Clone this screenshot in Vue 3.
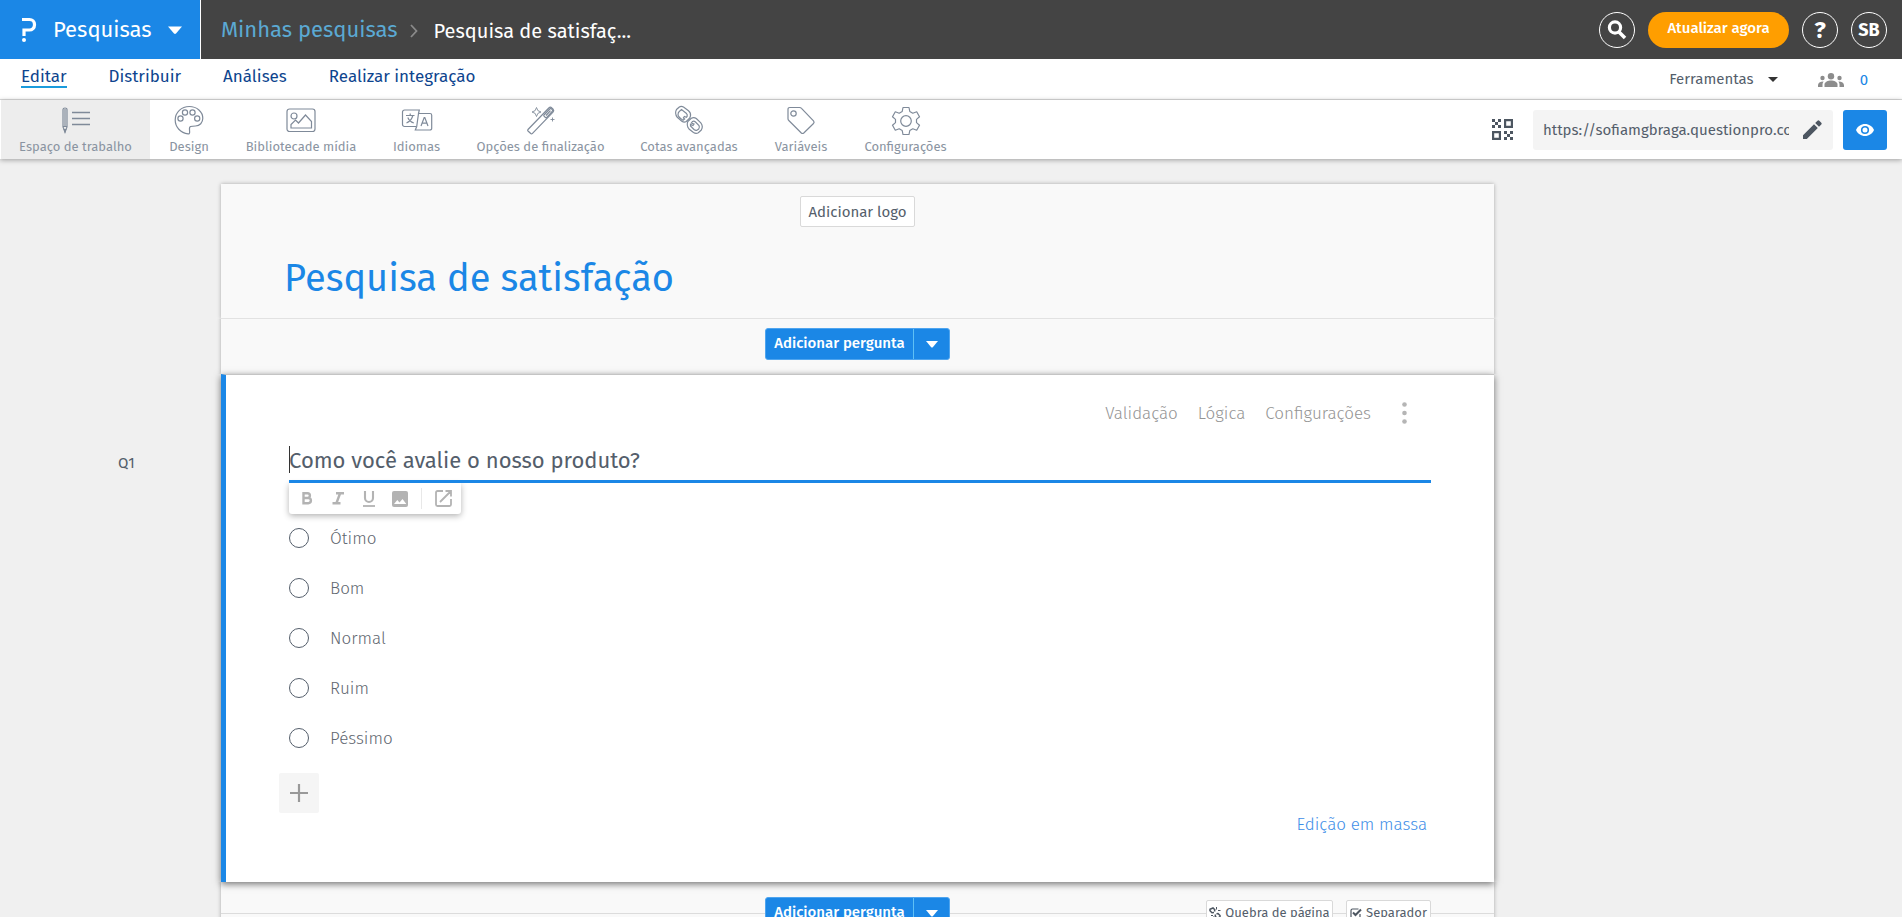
<script setup>
import { ref } from 'vue'

const menu = ['Editar', 'Distribuir', 'Análises', 'Realizar integração']

const tools = [
  { id: 'workspace', label: 'Espaço de trabalho' },
  { id: 'design', label: 'Design' },
  { id: 'media', label: 'Bibliotecade mídia' },
  { id: 'languages', label: 'Idiomas' },
  { id: 'finish', label: 'Opções de finalização' },
  { id: 'quotas', label: 'Cotas avançadas' },
  { id: 'variables', label: 'Variáveis' },
  { id: 'settings', label: 'Configurações' },
]

const options = ['Ótimo', 'Bom', 'Normal', 'Ruim', 'Péssimo']

const url = ref('https://sofiamgbraga.questionpro.com')
const question = ref('Como você avalie o nosso produto?')
const answer = ref('')
</script>

<template>
  <div class="page">
    <header class="topbar">
      <button class="product" type="button">
        <svg class="logo" width="16" height="26" viewBox="0 0 16 26" aria-hidden="true">
          <path d="M1 2.500h7.500a5 5 0 0 1 5 5v.5a5 5 0 0 1-5 5H3v6" fill="none" stroke="#fff" stroke-width="3.200" />
          <circle cx="3" cy="23" r="2" fill="#fff" />
        </svg>
        <span>Pesquisas</span>
        <svg width="14" height="8" viewBox="0 0 14 8" aria-hidden="true">
          <path d="M0 .5h14L8 7.500q-1 .8-2 0z" fill="#fff" />
        </svg>
      </button>
      <nav class="crumbs" aria-label="Navegação">
        <a href="#pesquisas">Minhas pesquisas</a>
        <svg width="8" height="14" viewBox="0 0 8 14" aria-hidden="true">
          <path d="M1 1l5.500 6L1 13" fill="none" stroke="#8a8a8a" stroke-width="1.800" />
        </svg>
        <span class="current">Pesquisa de satisfaç...</span>
      </nav>
      <div class="account">
        <button class="round" type="button" aria-label="Buscar">
          <svg width="20" height="20" viewBox="0 0 20 20" aria-hidden="true">
            <circle cx="8" cy="7.500" r="5.600" fill="none" stroke="#fff" stroke-width="3.200" />
            <path d="M11.500 11.500l6.500 6.500" stroke="#fff" stroke-width="3.600" />
          </svg>
        </button>
        <button class="upgrade" type="button">Atualizar agora</button>
        <button class="round help" type="button">?</button>
        <button class="round user" type="button">SB</button>
      </div>
    </header>

    <div class="menubar">
      <nav class="menu" aria-label="Menu">
        <a v-for="(item, i) in menu" :key="item" href="#menu" :class="{ active: i === 0 }">{{ item }}</a>
      </nav>
      <button class="ferramentas" type="button">
        <span>Ferramentas</span>
        <svg width="10" height="5" viewBox="0 0 10 5" aria-hidden="true"><path d="M0 0h10L5 5z" fill="#333" /></svg>
      </button>
      <a class="people" href="#colaboradores">
        <svg width="26" height="14" viewBox="0 0 26 14" fill="#8c8c8c" aria-hidden="true">
          <circle cx="13" cy="3.200" r="3.200" />
          <circle cx="4.500" cy="5" r="2.200" />
          <circle cx="21.500" cy="5" r="2.200" />
          <path d="M6.500 14v-2.500c0-2.500 3.500-4 6.500-4s6.500 1.500 6.500 4V14z" />
          <path d="M0 14v-1.800c0-2 2-3.700 5.600-3.700-.8 1-1.100 2-1.100 3V14zM26 14v-1.800c0-2-2-3.700-5.600-3.700.8 1 1.100 2 1.100 3V14z" />
        </svg>
        <span>0</span>
      </a>
    </div>

    <div class="toolbar">
      <div class="tools">
        <button v-for="(tool, i) in tools" :key="tool.id" type="button" class="tool" :class="{ selected: i === 0 }">
          <svg width="32" height="30" viewBox="0 0 32 30" fill="none" stroke="#7f8a99" stroke-width="1.200" aria-hidden="true">
            <g v-if="tool.id === 'workspace'">
              <path d="M3 4.500q0-1.500 2-1.500t2 1.500V22l-2 5-2-5zM3 21.500h4M5 4v17" />
              <path d="M4.200 24.500h1.600L5 27z" fill="#7f8a99" />
              <path d="M12 7.500H30M12 13.500H30M12 19.500H30" stroke-width="1.500" />
            </g>
            <g v-else-if="tool.id === 'design'">
              <path d="M17.500 21.500c-2 .8-.6 3.500-.9 6.300-.1 1-.6 1.200-1.500 1C7.500 28 2.200 22 2.200 15 2.200 7.500 8.500 1.500 16.300 1.500c7.600 0 13.500 5.300 13.500 11.800 0 4.300-3 7.700-7.300 7.700-2 0-3.500 0-5 .5z" />
              <circle cx="7.500" cy="13.500" r="2.600" /><circle cx="12" cy="7.500" r="2.600" />
              <circle cx="19.500" cy="7.500" r="2.600" /><circle cx="24.200" cy="13.500" r="2.600" />
            </g>
            <g v-else-if="tool.id === 'media'">
              <rect x="2" y="4" width="28" height="22.500" rx="2.500" />
              <circle cx="9" cy="11" r="3" />
              <path d="M6 23v-3.500l4.500-4.500 3 3L20.500 10l6 6.500V23z" />
            </g>
            <g v-else-if="tool.id === 'languages'">
              <path d="M15 21.500H3.500a2 2 0 0 1-2-2V7a2 2 0 0 1 2-2h14.800l-.8 3.500" />
              <path d="M17.500 8.500H29a1.700 1.700 0 0 1 1.700 1.700v13A1.700 1.700 0 0 1 29 25H14.300l1.400-3.500z" />
              <path d="M5 10.500h8.500M9.200 8.500v2M11.800 10.500c-.8 3.500-3 6-6.300 7.500M6.800 12.500c1 2.500 3 4.500 6 5.500" />
              <path d="M20 21l3.200-8.500h.6L27 21M21 18.200h5" />
            </g>
            <g v-else-if="tool.id === 'finish'">
              <path d="M3 24.500L23.800 3q1.500-1.500 3-.1l1.300 1.300q1.300 1.500-.1 3L7.500 28.300q-1 1-2 0L3 26q-.7-.8 0-1.500z" />
              <path d="M19 10l5.700-6q1-1 2 0l.6.700q.8.900-.1 1.800l-5.400 5.800q-.8.800-1.600 0L19 11.200q-.5-.6 0-1.200zM21 10.500l4.500-4.800" />
              <path d="M11.500 2.500q.5 4 4.500 4.500-4 .5-4.500 4.500Q11 7.500 7 7q4-.5 4.500-4.500zM27.500 12.500v4M25.500 14.500h4" stroke-width=".9" />
            </g>
            <g v-else-if="tool.id === 'quotas'">
              <path d="M3.500 4.500L6 2.300q2-1.500 4.500-.3l5 3.800q2.500 2 2 5l-.7 2.200-3.500 3.500q-2 1.200-4.500-.2l-4.500-4q-3-4-.8-7.800z" />
              <path d="M6.500 6.200l2-1.600 4.700 3.600q1.500 1.500.9 3.300l-.7.8-2-.8-1 1.500 1.200 1-1.600 1.200q-5-3.500-5-5.500 0-2.500 1.500-3.500z" />
              <path d="M14.800 16.500l3.500-3.200q2.500-1.500 5 .2l4.500 4.300q2.700 3.500.5 7.200l-3 2.700q-2.300 1.300-4.800-.2l-4.500-3.500q-2.800-3.500-1.200-7.500z" />
              <path d="M18.300 18l1.200-1.500q1.500-.8 3 .5l3.500 3.500q1 2-.3 3.500l-1.700 1.200q-1.500.5-3-.7L17.500 21v-1.500l2.500 1 1-1.500z" />
            </g>
            <g v-else-if="tool.id === 'variables'">
              <path d="M3 4.300q0-1.800 1.800-1.800h9.700q1.300 0 2 .8l12 12.500q1.200 1.400 0 2.700l-9.700 9.500q-1.300 1-2.500 0L3.800 15.500Q3 14.800 3 13.700z" />
              <circle cx="8.500" cy="8.500" r="2.700" />
            </g>
            <g v-else stroke-linejoin="round">
              <path d="M13 2.500h6l.8 4 3 1.700 3.900-1.400 2.800 4.900-3 2.700v3.200l3 2.700-2.800 4.900-3.900-1.400-3 1.700-.8 4h-6l-.8-4-3-1.700-3.900 1.400-2.800-4.900 3-2.700v-3.200l-3-2.700 2.800-4.900 3.900 1.400 3-1.700z" />
              <circle cx="16" cy="16" r="5.300" />
            </g>
          </svg>
          <span>{{ tool.label }}</span>
        </button>
      </div>
      <div class="share">
        <button class="plain qr" type="button" aria-label="Código QR">
          <svg width="21" height="21" viewBox="0 0 21 21" fill="#4d5661" aria-hidden="true">
            <path d="M12 0h9v9h-9zM14.200 2.200v4.600h4.600V2.200zM0 12h9v9H0zM2.200 14.200v4.600h4.600v-4.600z" fill-rule="evenodd" />
            <path d="M0 0h3v3H0zM6 0h3v3H6zM3 3h3v3H3zM0 6h3v3H0zM6 6h3v3H6z" />
            <path d="M12 12h3v3h-3zM18 12h3v3h-3zM15 15h3v3h-3zM12 18h3v3h-3zM18 18h3v3h-3z" />
          </svg>
        </button>
        <div class="link-box">
          <input v-model="url" type="text" aria-label="Link da pesquisa" />
          <button class="plain" type="button" aria-label="Editar link">
            <svg width="20" height="20" viewBox="0 0 20 20" fill="#4d5661" aria-hidden="true">
              <path d="M1 15.200L12 4.200 15.800 8l-11 11H1zM13.200 3l2.300-2.300q.9-.8 1.800 0l2 2q.8.900 0 1.800L17 6.800z" />
            </svg>
          </button>
        </div>
        <button class="preview" type="button" aria-label="Visualizar">
          <svg width="18" height="12" viewBox="0 0 18 12" aria-hidden="true">
            <path d="M9 0C5 0 1.500 2.500 0 6c1.500 3.500 5 6 9 6s7.500-2.500 9-6c-1.500-3.500-5-6-9-6z" fill="#fff" />
            <circle cx="9" cy="6" r="3.300" fill="none" stroke="#1b87e6" stroke-width="1.600" />
          </svg>
        </button>
      </div>
    </div>

    <main class="canvas">
      <section class="sheet heading">
        <button class="add-logo" type="button">Adicionar logo</button>
        <h1>Pesquisa de satisfação</h1>
      </section>

      <section class="sheet insert">
        <div class="split">
          <button class="add" type="button">Adicionar pergunta</button>
          <button class="more" type="button" aria-label="Mais tipos">
            <svg width="12" height="7" viewBox="0 0 12 7" aria-hidden="true"><path d="M0 0h12L6.800 6.200q-.8.700-1.600 0z" fill="#fff" /></svg>
          </button>
        </div>
      </section>

      <span class="number">Q1</span>
      <section class="sheet question">
        <div class="actions">
          <a href="#validacao">Validação</a>
          <a href="#logica">Lógica</a>
          <a href="#configuracoes">Configurações</a>
          <button class="plain dots" type="button" aria-label="Mais opções">
            <svg width="5" height="22" viewBox="0 0 5 22" fill="#b5b5b5" aria-hidden="true">
              <circle cx="2.500" cy="2.500" r="2.300" /><circle cx="2.500" cy="11" r="2.300" /><circle cx="2.500" cy="19.500" r="2.300" />
            </svg>
          </button>
        </div>

        <div class="field">
          <input v-model="question" type="text" aria-label="Texto da pergunta" />
          <i class="caret"></i>
        </div>

        <div class="format">
          <button class="plain" type="button" aria-label="Negrito">
            <svg width="16" height="16" viewBox="0 0 16 16" aria-hidden="true">
              <path d="M4.500 2.200h4a2.300 2.300 0 0 1 0 4.800h-4zM4.500 7h4.800a2.500 2.500 0 0 1 0 5.200H4.500z" fill="none" stroke="#b3b3b3" stroke-width="2.400" />
            </svg>
          </button>
          <button class="plain" type="button" aria-label="Itálico">
            <svg width="16" height="16" viewBox="0 0 16 16" aria-hidden="true">
              <path d="M6 2.200h8M2.500 12.200h8M10.200 2L6.300 12.500" fill="none" stroke="#b3b3b3" stroke-width="2.400" />
            </svg>
          </button>
          <button class="plain" type="button" aria-label="Sublinhado">
            <svg width="16" height="16" viewBox="0 0 16 16" aria-hidden="true">
              <path d="M4 0v7a4 4 0 0 0 8 0V0" fill="none" stroke="#b3b3b3" stroke-width="2.100" />
              <path d="M2 15h12" stroke="#b3b3b3" stroke-width="1.800" />
            </svg>
          </button>
          <button class="plain" type="button" aria-label="Imagem">
            <svg width="16" height="16" viewBox="0 0 16 16" aria-hidden="true">
              <rect width="16" height="16" rx="2" fill="#b3b3b3" />
              <path d="M2 13l3.300-4 2.200 2.500L10.500 8l3.800 5z" fill="#fff" />
            </svg>
          </button>
          <span class="rule"></span>
          <button class="plain" type="button" aria-label="Abrir editor">
            <svg width="17" height="17" viewBox="0 0 17 17" fill="none" stroke="#b3b3b3" stroke-width="1.800" aria-hidden="true">
              <path d="M8 1H2.500A1.500 1.500 0 0 0 1 2.500v12A1.500 1.500 0 0 0 2.500 16h12a1.500 1.500 0 0 0 1.500-1.500V9M10.500 1H16v5.500M16 1L5 12" />
            </svg>
          </button>
        </div>

        <div class="options">
          <label v-for="option in options" :key="option">
            <input v-model="answer" type="radio" name="resposta" :value="option" />
            <span>{{ option }}</span>
          </label>
        </div>

        <button class="plus" type="button" aria-label="Adicionar opção">
          <svg width="18" height="18" viewBox="0 0 18 18" aria-hidden="true"><path d="M9 0v18M0 9h18" stroke="#999" stroke-width="2.200" /></svg>
        </button>
        <a class="bulk" href="#massa">Edição em massa</a>
      </section>

      <section class="sheet insert last">
        <div class="split">
          <button class="add" type="button">Adicionar pergunta</button>
          <button class="more" type="button" aria-label="Mais tipos">
            <svg width="12" height="7" viewBox="0 0 12 7" aria-hidden="true"><path d="M0 0h12L6.800 6.200q-.8.700-1.600 0z" fill="#fff" /></svg>
          </button>
        </div>
        <div class="breaks">
          <button type="button" class="page-break">
            <svg width="12" height="12" viewBox="0 0 12 12" fill="none" stroke="#4d5661" stroke-width="1.500" aria-hidden="true">
              <path d="M5.500 4.500l.3-1.700L4 1 1 2.200v1.500l2 2 2-.2M6.500 7.500l-.3 1.700 1.800 2 3-1.200V8.500l-2-2-1.500.2" />
              <path d="M7.500 0v2.500M9 3.500h2.500M2 8.500h2M4.500 9.500V12" stroke-width="1" />
            </svg>
            <span>Quebra de página</span>
          </button>
          <button type="button" class="separator">
            <svg width="12" height="12" viewBox="0 0 12 12" fill="none" stroke="#4d5661" aria-hidden="true">
              <path d="M10 7v2.500a1.500 1.500 0 0 1-1.500 1.500h-6A1.500 1.500 0 0 1 1 9.500v-6A1.500 1.500 0 0 1 2.500 2H8.500" stroke-width="1.200" />
              <path d="M3 5.500l2.500 2.500L11 2.500" stroke-width="2" />
            </svg>
            <span>Separador</span>
          </button>
        </div>
      </section>
    </main>
  </div>
</template>

<style>
body {
  margin: 0;
  background: #f0f0f0;
}
</style>

<style scoped>
.page {
  display: flex;
  flex-direction: column;
  height: 100vh;
  overflow: hidden;
  background: #f0f0f0;
  color: #545e6b;
  font-family: "Fira Sans", "Noto Sans", "Open Sans", sans-serif;
  font-size: 15px;
}
* {
  box-sizing: border-box;
}
button,
input {
  margin: 0;
  padding: 0;
  border: 0;
  font: inherit;
  color: inherit;
}
button {
  display: flex;
  align-items: center;
  justify-content: center;
  background: none;
  white-space: nowrap;
}
a {
  text-decoration: none;
}
svg {
  display: block;
  flex: none;
}

/* Top bar */
.topbar {
  display: flex;
  flex: none;
  height: 59px;
  background: #444;
  color: #fff;
}
.product {
  justify-content: flex-start;
  width: 201px;
  padding-left: 17px;
  border-right: 1px solid #fff;
  background: #1b87e6;
  font-size: 22px;
}
.logo {
  margin-left: 4px;
}
.product span {
  width: 99px;
  margin: 0 16px;
  text-align: left;
}
.crumbs {
  display: flex;
  align-items: center;
  flex: 1;
  padding-left: 20px;
}
.crumbs a {
  color: #5ba9d3;
  font-size: 22px;
}
.crumbs svg {
  margin: 2px 16px 0 12px;
}
.current {
  font-size: 20px;
  padding-top: 2px;
}
.account {
  display: flex;
  align-items: center;
  gap: 13px;
  padding-right: 15px;
}
.round {
  width: 36px;
  height: 36px;
  border: 1px solid #fff;
  border-radius: 50%;
  font-weight: 700;
}
.help {
  font-size: 24px;
}
.user {
  font-size: 18px;
}
.upgrade {
  width: 141px;
  height: 36px;
  padding-bottom: 3px;
  border-radius: 18px;
  background: #ff9e00;
  font-weight: 500;
}

/* Menu */
.menubar {
  display: flex;
  flex: none;
  height: 41px;
  border-bottom: 1px solid #dcdcdc;
  background: #fff;
}
.menu {
  display: flex;
  align-items: flex-start;
  flex: 1;
  gap: 42px;
  padding: 8px 0 0 21px;
}
.menu a {
  color: #0d448e;
  font-size: 17px;
  line-height: 19px;
}
.menu .active {
  border-bottom: 2px solid #1b9bdc;
}
.ferramentas {
  gap: 14px;
  height: 40px;
}
.people {
  display: flex;
  align-items: center;
  gap: 16px;
  height: 41px;
  margin: 0 34px 0 40px;
  color: #1b87e6;
}

/* Tools */
.toolbar {
  position: relative;
  display: flex;
  align-items: center;
  justify-content: space-between;
  flex: none;
  height: 59px;
  padding: 0 15px 0 1px;
  background: #fff;
  box-shadow: 0 1px 5px rgba(0, 0, 0, 0.35);
}
.tools {
  display: grid;
  grid-template-columns: 149px 78px 146px 85px 163px 134px 90px 119px;
  height: 100%;
}
.tool {
  flex-direction: column;
  justify-content: flex-start;
  gap: 2px;
  padding-top: 5px;
  color: #8a94a1;
  font-size: 13px;
  line-height: 20px;
}
.selected {
  background: #ededed;
}
.share {
  display: flex;
  align-items: center;
}
.qr {
  margin-right: 20px;
}
.link-box {
  display: flex;
  align-items: center;
  width: 300px;
  height: 40px;
  margin-right: 10px;
  padding: 0 11px 0 10px;
  border-radius: 3px;
  background: #f4f4f4;
}
.link-box input {
  flex: 1;
  min-width: 0;
  margin-right: 13px;
  background: none;
}
.preview {
  width: 44px;
  height: 40px;
  border-radius: 3px;
  background: #1b87e6;
}

/* Survey */
.canvas {
  display: grid;
  grid-template-columns: 221px minmax(0, 1fr) 408px;
  padding-top: 25px;
}
.sheet {
  grid-column: 2;
  background: #f9f9f9;
  box-shadow: 0 0 4px rgba(0, 0, 0, 0.3);
}
.heading {
  padding: 12px 63px 0;
  height: 135px;
  border-bottom: 1px solid #e2e2e2;
}
.add-logo {
  height: 31px;
  margin: 0 auto;
  width: 115px;
  border: 1px solid #d9d9d9;
  border-radius: 2px;
  background: #fff;
}
h1 {
  margin: 25px 0 0;
  color: #1b87e6;
  font-size: 38px;
  font-weight: 400;
  line-height: 52px;
}
.insert {
  position: relative;
  display: flex;
  justify-content: center;
  height: 55px;
  padding-top: 9px;
  clip-path: inset(0 -6px);
}
.split {
  display: flex;
  width: 185px;
  height: 32px;
  border: 1px solid #4fa5ef;
  border-radius: 3px;
  background: #1b87e6;
  color: #fff;
}
.add {
  flex: 1;
  padding-bottom: 2px;
  font-weight: 500;
}
.more {
  width: 36px;
  border-left: 1px solid #5fc0f5;
}
.number {
  grid-column: 1;
  padding: 80px 0 0 118px;
}
.question {
  position: relative;
  z-index: 1;
  display: flex;
  flex-direction: column;
  align-items: flex-start;
  height: 508px;
  padding: 23px 63px 0 63px;
  border-top: 1px solid #c4c4c4;
  border-left: 5px solid #1b87e6;
  background: #fff;
  box-shadow: 0 2px 7px rgba(0, 0, 0, 0.55);
}
.actions {
  display: flex;
  align-items: center;
  align-self: flex-end;
  gap: 20px;
  height: 30px;
  margin-right: 24px;
}
.actions a {
  color: #949494;
  font-size: 17px;
  font-weight: 300;
}
.dots {
  margin-left: 11px;
}
.field {
  position: relative;
  align-self: stretch;
  height: 55px;
  border-bottom: 3px solid #1b87e6;
}
.field input {
  width: 100%;
  height: 30px;
  margin-top: 17px;
  font-size: 22px;
}
.caret {
  position: absolute;
  top: 18px;
  left: 0;
  width: 1px;
  height: 27px;
  background: #333;
}
.format {
  display: flex;
  align-items: center;
  width: 172px;
  height: 31px;
  padding-left: 10px;
  gap: 15px;
  border-radius: 0 0 3px 3px;
  box-shadow: 0 2px 6px rgba(0, 0, 0, 0.3);
}
.rule {
  width: 1px;
  height: 21px;
  margin: 0 -2px;
  background: #e8e8e8;
}
.options {
  display: flex;
  flex-direction: column;
  gap: 20px;
  margin-top: 9px;
}
label {
  display: flex;
  align-items: center;
  gap: 21px;
  height: 30px;
  color: #5f6770;
  font-size: 17px;
  font-weight: 300;
}
input[type="radio"] {
  appearance: none;
  width: 20px;
  height: 20px;
  border: 1px solid #545e6b;
  border-radius: 50%;
}
.plus {
  width: 40px;
  height: 40px;
  margin: 20px 0 0 -10px;
  border-radius: 2px;
  background: #f5f5f5;
}
.bulk {
  align-self: flex-end;
  margin-right: 4px;
  color: #3e8ee8;
  font-size: 17px;
  font-weight: 300;
  line-height: 24px;
}
.last {
  height: 60px;
  padding-top: 15px;
  background: linear-gradient(#dcdcdc, #dcdcdc) 0 31px / 100% 1px no-repeat #f9f9f9;
}
.breaks {
  position: absolute;
  top: 18px;
  right: 63px;
  display: flex;
  gap: 13px;
}
.breaks button {
  gap: 4px;
  height: 25px;
  border: 1px solid #d9d9d9;
  border-radius: 2px;
  background: #fff;
  font-size: 13px;
}
.page-break {
  width: 127px;
}
.separator {
  width: 85px;
}
</style>
